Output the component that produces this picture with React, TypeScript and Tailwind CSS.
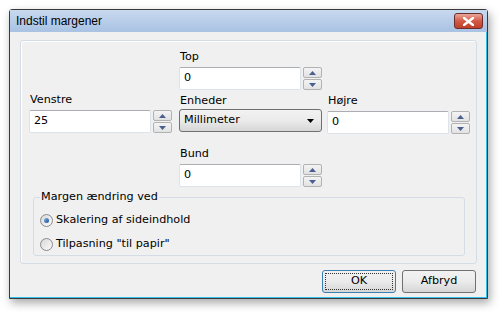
import React from 'react';

const font = { fontFamily: '"DejaVu Sans", Tahoma, sans-serif' };

function Spinner() {
  return (
    <div className="ml-[2px] flex w-[19px] flex-col gap-px">
      <button className="flex h-[11px] items-center justify-center rounded-[2px] border border-[#b2b2b2] bg-gradient-to-b from-[#f4f4f4] to-[#e2e2e2]">
        <svg width="7" height="4" viewBox="0 0 7 4">
          <path d="M3.5 0 L7 4 L0 4 Z" fill="#4a5f8f" />
        </svg>
      </button>
      <button className="flex h-[11px] items-center justify-center rounded-[2px] border border-[#b2b2b2] bg-gradient-to-b from-[#f4f4f4] to-[#e2e2e2]">
        <svg width="7" height="4" viewBox="0 0 7 4">
          <path d="M0 0 L7 0 L3.5 4 Z" fill="#4a5f8f" />
        </svg>
      </button>
    </div>
  );
}

function NumField({ label, value }: { label: string; value: string }) {
  return (
    <div className="flex flex-col">
      <div className="h-[16px] pl-px text-[11.2px] leading-[16px] text-black">{label}</div>
      <div className="mt-[2px] flex">
        <div className="flex h-[23px] w-[122px] items-center rounded-[2px] border border-[#dde3ea] border-t-[#abadb3] bg-white px-[4px] text-[11.2px] text-black">
          {value}
        </div>
        <Spinner />
      </div>
    </div>
  );
}

function Radio({ checked, label }: { checked?: boolean; label: string }) {
  return (
    <label className="flex h-[24px] items-center gap-[3px] text-[11.2px] text-black">
      <span className="flex h-[13px] w-[13px] items-center justify-center rounded-full border border-[#8a8a8a] bg-gradient-to-br from-[#d8d8d8] to-[#fafafa]">
        {checked && <span className="h-[5px] w-[5px] rounded-full bg-gradient-to-br from-[#7fb2e6] to-[#1b4f94]" />}
      </span>
      {label}
    </label>
  );
}

export default function App() {
  return (
    <div className="h-[314px] w-[502px] bg-white pl-[9px] pt-[9px]" style={font}>
      <div className="flex h-[290px] w-[479px] flex-col rounded-t-[3px] border border-[#3a3a3a] bg-[#f0f0f0] shadow-[inset_-1px_-1px_0_#2ec0e8,2px_4px_10px_rgba(0,0,0,0.35)]">
        {/* title bar */}
        <div className="flex h-[22px] items-center justify-between bg-gradient-to-b from-[#c8d9ef] to-[#a9c2e3] pl-[6px] pr-[4px]">
          <span className="text-[12px] text-black" style={{ fontFamily: '"Liberation Sans", Arial, sans-serif' }}>
            Indstil margener
          </span>
          <button className="flex h-[16px] w-[29px] items-center justify-center rounded-[3px] border border-[#6b2d2d] bg-gradient-to-b from-[#e8a79b] via-[#d25a45] to-[#c0402a]">
            <svg width="11" height="9" viewBox="0 0 11 9">
              <path d="M1 1 L10 8 M10 1 L1 8" stroke="#fff" strokeWidth="2.4" strokeLinecap="square" />
            </svg>
          </button>
        </div>

        {/* client */}
        <div className="flex flex-1 flex-col px-[10px] pt-[8px]">
          <div className="h-[224px] rounded-[3px] border border-[#d4dde6] shadow-[inset_1px_1px_0_#fff]">
            <div className="flex pl-[8px] pt-[8px]">
              <div className="mt-[43px]">
                <NumField label="Venstre" value="25" />
              </div>
              <div className="ml-[7px] flex flex-col">
                <NumField label="Top" value="0" />
                <div className="mt-[3px] h-[16px] pl-px text-[11.2px] leading-[16px] text-black">Enheder</div>
                <div className="flex h-[23px] w-[143px] items-center justify-between rounded-[3px] border border-[#707070] bg-gradient-to-b from-[#f2f2f2] via-[#ebebeb] to-[#d6d6d6] pl-[4px] pr-[7px] text-[11.2px] text-black">
                  <span>Millimeter</span>
                  <svg width="7" height="4" viewBox="0 0 7 4">
                    <path d="M0 0 L7 0 L3.5 4 Z" fill="#000" />
                  </svg>
                </div>
                <div className="mt-[14px]">
                  <NumField label="Bund" value="0" />
                </div>
              </div>
              <div className="ml-[5px] mt-[44px]">
                <NumField label="Højre" value="0" />
              </div>
            </div>

            <fieldset className="ml-[12px] mt-[2px] h-[67px] w-[432px] rounded-[3px] border border-[#d4dde6] px-[6px] pt-[3px]">
              <legend className="px-[1px] text-[11.2px] leading-[16px] text-black">Margen ændring ved</legend>
              <Radio checked label="Skalering af sideindhold" />
              <Radio label={'Tilpasning "til papir"'} />
            </fieldset>
          </div>

          <div className="mt-[6px] flex justify-end gap-[6px] pr-[1px]">
            <button className="flex h-[23px] w-[74px] items-center justify-center rounded-[3px] border border-[#3c7fb1] bg-gradient-to-b from-[#f2f2f2] via-[#ebebeb] to-[#d6d6d6] p-[2px] text-[11.2px] text-black">
              <span className="flex h-full w-full items-center justify-center border border-dotted border-[#333]">OK</span>
            </button>
            <button className="flex h-[23px] w-[74px] items-center justify-center rounded-[3px] border border-[#707070] bg-gradient-to-b from-[#f2f2f2] via-[#ebebeb] to-[#d6d6d6] text-[11.2px] text-black">
              Afbryd
            </button>
          </div>
        </div>
      </div>
    </div>
  );
}
